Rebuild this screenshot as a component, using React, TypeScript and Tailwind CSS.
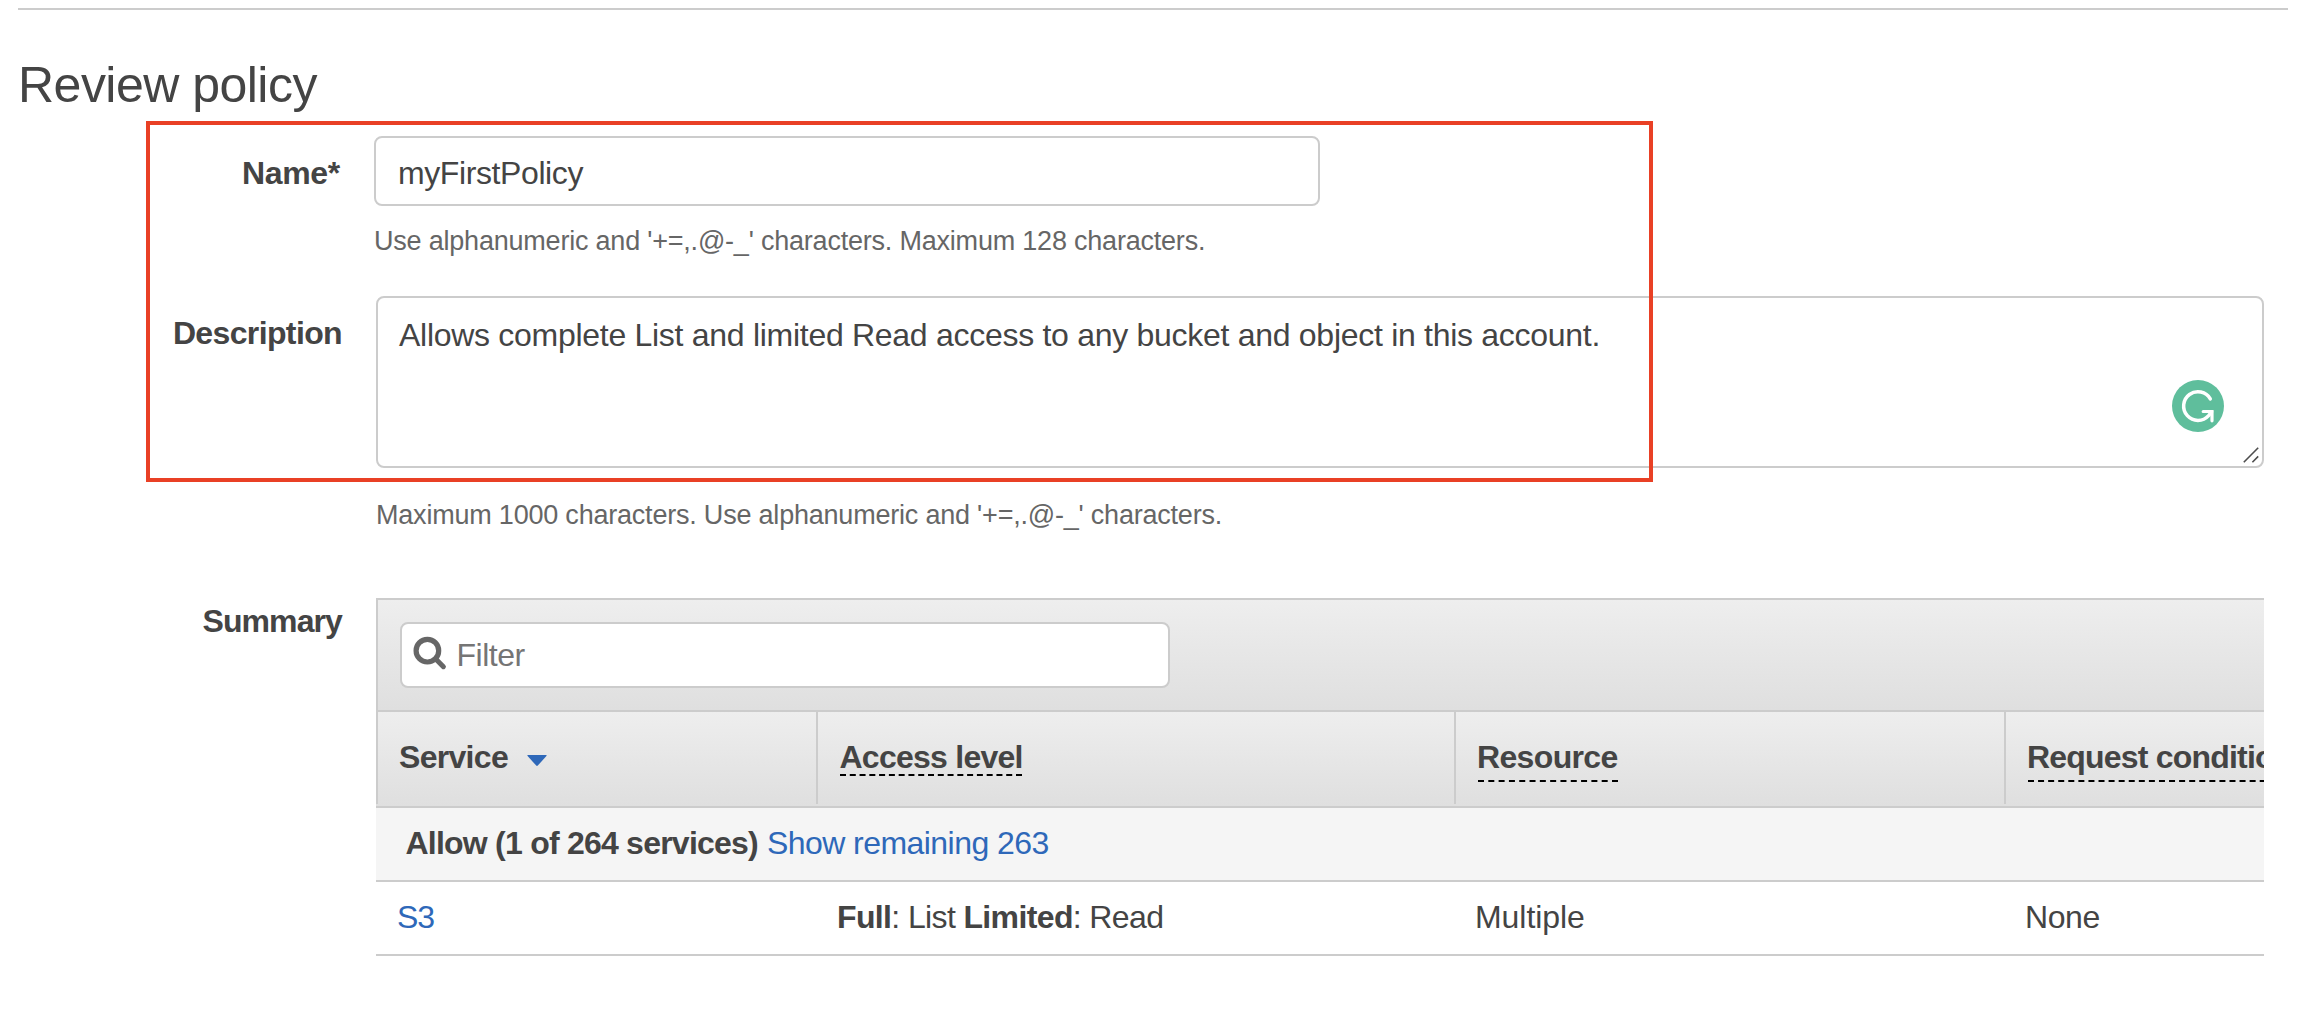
import type { ReactNode } from "react";

function SearchIcon() {
  return (
    <svg className="absolute left-[10px] top-[11px] h-[36px] w-[36px]" viewBox="0 0 36 36" fill="none">
      <circle cx="15.4" cy="15.7" r="11.3" stroke="#666" strokeWidth="5.2" />
      <path d="M24 24.3L31.4 31.7" stroke="#666" strokeWidth="5" strokeLinecap="round" />
    </svg>
  );
}

function SortArrow() {
  return (
    <svg className="ml-[19px] mt-[18px] h-[12px] w-[20px]" viewBox="0 0 20 12">
      <path d="M1 0H19Q20.2 0 19.4 1L10.8 10.6Q10 11.4 9.2 10.6L0.6 1Q-0.2 0 1 0Z" fill="#2e68b9" />
    </svg>
  );
}

function AssistantBadge() {
  return (
    <svg className="absolute right-[38px] bottom-[34px] h-[52px] w-[52px]" viewBox="0 0 52 52" fill="none">
      <circle cx="26" cy="26" r="26" fill="#5fbe9c" />
      <path d="M38.3 18.9A14.3 14.3 0 1 0 36.6 35.6L39.6 31.8" stroke="#fff" strokeWidth="3.5" strokeLinecap="round" />
      <path d="M31.2 31.5H40V40.8" stroke="#fff" strokeWidth="3.2" strokeLinecap="round" strokeLinejoin="miter" />
    </svg>
  );
}

function ResizeGrip() {
  return (
    <svg className="absolute right-[3.5px] bottom-[3.5px] h-[16px] w-[16px]" viewBox="0 0 16 16" fill="none">
      <path d="M0.8 15.2L15.2 0.8M9.4 15.2L15.2 9.4" stroke="#4d4d4d" strokeWidth="1.6" />
    </svg>
  );
}

function Field({ label, labelClass, className, children }: { label: string; labelClass: string; className: string; children: ReactNode }) {
  return (
    <div className={"flex gap-[34px] " + className}>
      <div className={"shrink-0 text-right font-bold leading-10 " + labelClass}>{label}</div>
      {children}
    </div>
  );
}

export default function App() {
  return (
    <div className="h-[1022px] w-[2310px] overflow-hidden bg-white pt-2 font-['Liberation_Sans',Arial,sans-serif] text-[32px] leading-10 whitespace-nowrap text-[#444]">
      <div className="ml-[18px] h-0.5 w-[2270px] bg-[#ccc]" />
      <h1 className="mt-[45px] pl-[18px] text-[50px] leading-[60px] tracking-[-0.52px]">Review policy</h1>

      <div className="relative mt-[21px]">
        <div className="pointer-events-none absolute left-[146px] top-[-15px] z-10 h-[361px] w-[1507px] border-4 border-[#e94025]" />

        <Field label="Name*" className="" labelClass="w-[340px] pt-[17px] tracking-[-0.3px]">
          <div>
            <div className="h-[70px] w-[946px] rounded-lg border-2 border-[#ccc] pl-[22px] pt-[15px] tracking-[-0.4px]">myFirstPolicy</div>
            <p className="mt-5 text-[27px] leading-[30px] tracking-[-0.21px] text-[#666]">
              Use alphanumeric and '+=,.@-_' characters. Maximum 128 characters.
            </p>
          </div>
        </Field>

        <Field label="Description" className="mt-10" labelClass="w-[342px] pt-[17px] tracking-[-0.63px]">
          <div>
            <div className="relative h-[172px] w-[1888px] rounded-lg border-2 border-[#ccc] pl-[21px] pt-[17px] tracking-[-0.285px]">
              Allows complete List and limited Read access to any bucket and object in this account.
              <AssistantBadge />
              <ResizeGrip />
            </div>
            <p className="mt-8 text-[27px] leading-[30px] tracking-[-0.21px] text-[#666]">
              Maximum 1000 characters. Use alphanumeric and '+=,.@-_' characters.
            </p>
          </div>
        </Field>

        <Field label="Summary" className="mt-[68px]" labelClass="w-[342px] pt-[3px] tracking-[-0.9px]">
          <div className="w-[1888px] overflow-hidden border-t-2 border-[#ccc]">
            <div className="h-[110px] border-l-2 border-[#ccc] bg-linear-to-b from-[#eee] to-[#dfdfdf] pl-[22px] pt-[22px]">
              <div className="relative h-[66px] w-[770px] rounded-lg border-2 border-[#ccc] bg-white pl-[54.5px] pt-[11px] tracking-[-0.5px] text-[#757575]">
                <SearchIcon />
                Filter
              </div>
            </div>

            <div className="h-[98px] border-y-2 border-[#ccc] bg-linear-to-b from-[#eee] to-[#dfdfdf]">
              <div className="flex h-[92px] font-bold *:shrink-0 *:border-l-2 *:border-[#ccc] *:pt-[25px]">
                <div className="flex w-[440px] pl-[21px] tracking-[-0.7px]">
                  Service
                  <SortArrow />
                </div>
                <div className="w-[638px] pl-[22px]">
                  <div className="h-[39px] w-[182px] border-b-2 border-dashed border-black -indent-[0.5px] tracking-[-0.75px]">Access level</div>
                </div>
                <div className="w-[550px] pl-[22px]">
                  <div className="h-[45px] w-[140px] border-b-2 border-dashed border-black -indent-[1px] tracking-[-0.65px]">Resource</div>
                </div>
                <div className="w-[330px] pl-[22px]">
                  <div className="h-[45px] w-[278px] border-b-2 border-dashed border-black -indent-[1px] tracking-[-0.8px]">Request condition</div>
                </div>
              </div>
            </div>

            <div className="h-[74px] border-b-2 border-[#ccc] bg-[#f5f5f5] pl-[29.5px] pt-[15px]">
              <span className="font-bold tracking-[-0.77px]">Allow (1 of 264 services)</span>{" "}
              <span className="tracking-[-0.55px] text-[#2e68b9]">Show remaining 263</span>
            </div>

            <div className="flex h-[74px] border-b-2 border-[#ccc] pl-[21px] pt-[15px] *:shrink-0">
              <div className="w-[440px] tracking-[-1px] text-[#2e68b9]">S3</div>
              <div className="w-[638px] tracking-[-0.63px]">
                <b>Full</b>: List <b>Limited</b>: Read
              </div>
              <div className="w-[550px] tracking-[-0.05px]">Multiple</div>
              <div className="tracking-[-0.4px]">None</div>
            </div>
          </div>
        </Field>
      </div>
    </div>
  );
}
